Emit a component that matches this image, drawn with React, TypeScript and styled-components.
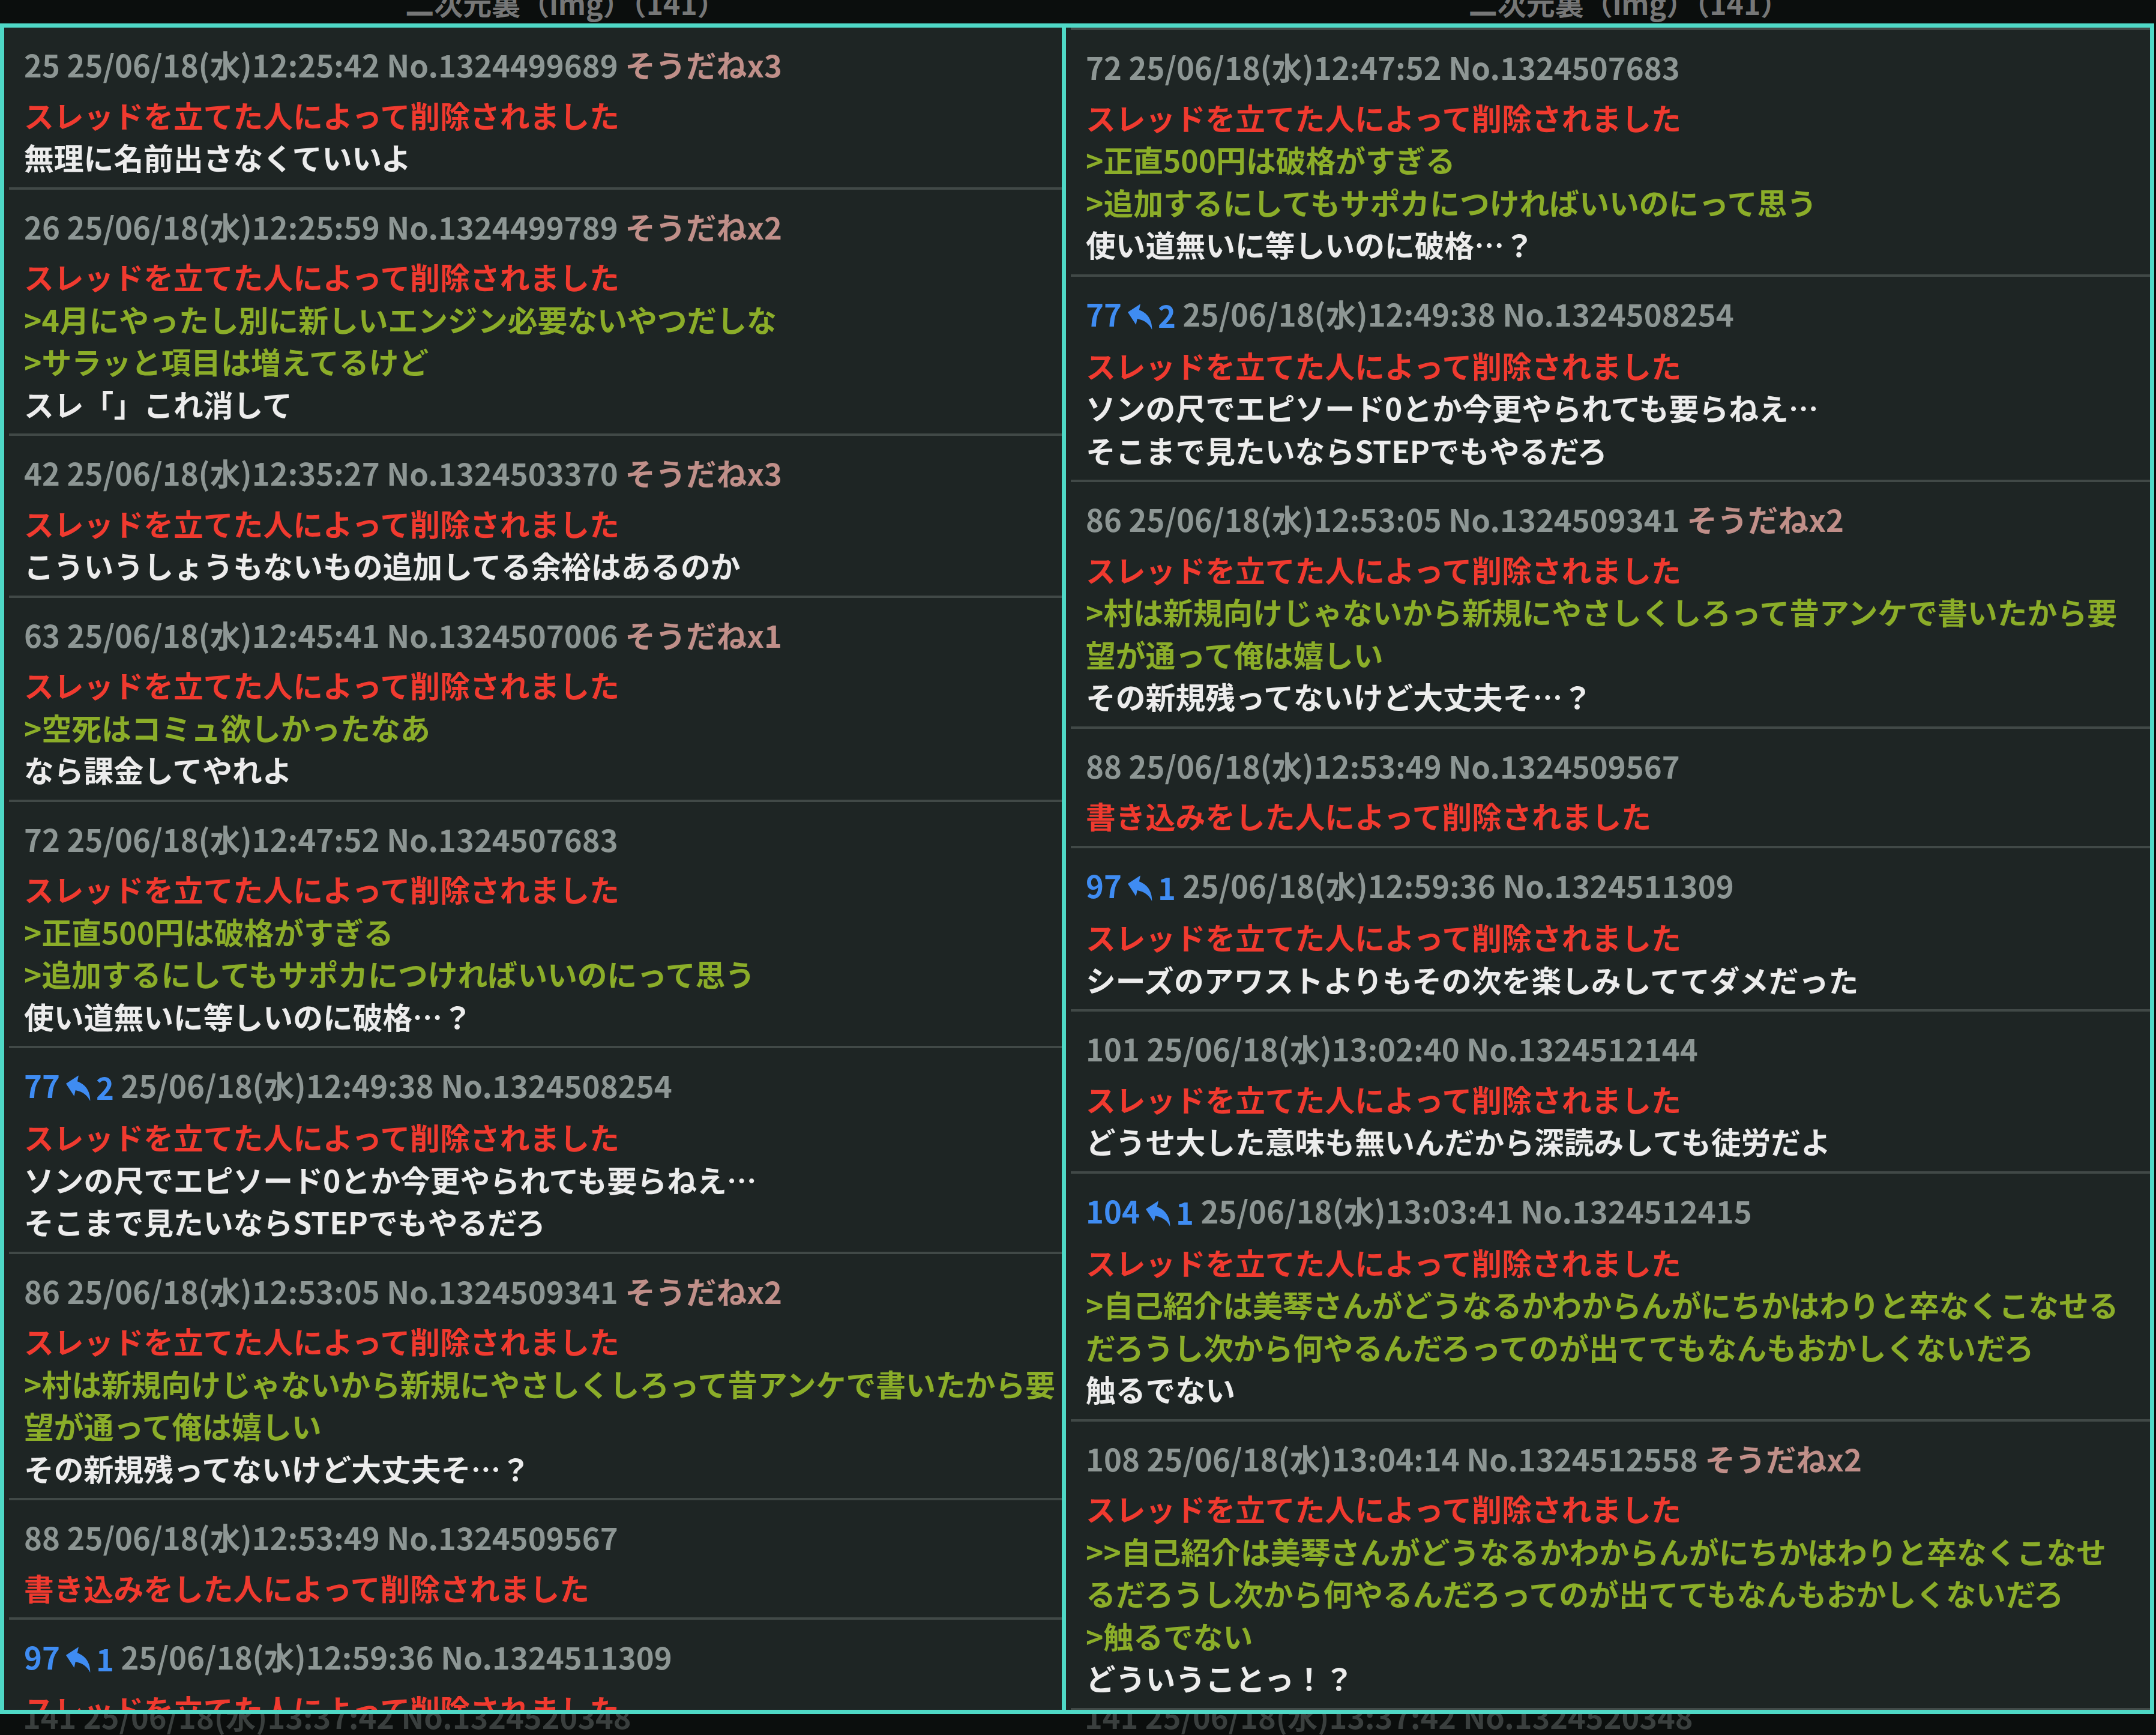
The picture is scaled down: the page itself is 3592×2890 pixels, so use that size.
import React from "react";
import styled, { createGlobalStyle } from "styled-components";

const C = {
  page: "#0b0e0d",
  panel: "#1e2524",
  teal: "#4fd8c6",
  rule: "#414947",
  meta: "#8d9694",
  sod: "#c08f89",
  blue: "#3f8cf2",
  red: "#f03a2f",
  quote: "#8bad29",
  text: "#ececec",
  title: "#767777",
  ghost: "#3a3f3e",
};

type Tone = "red" | "quote" | "plain";

interface Line {
  t: string;
  tone: Tone;
}

interface Post {
  no: number;
  reply?: number;
  date: string;
  id: string;
  sod?: string;
  lines: Line[];
}

const del: Line = { t: "スレッドを立てた人によって削除されました", tone: "red" };
const q = (t: string): Line => ({ t, tone: "quote" });
const p = (t: string): Line => ({ t, tone: "plain" });

const p72: Post = {
  no: 72,
  date: "25/06/18(水)12:47:52",
  id: "No.1324507683",
  lines: [del, q(">正直500円は破格がすぎる"), q(">追加するにしてもサポカにつければいいのにって思う"), p("使い道無いに等しいのに破格…？")],
};
const p77: Post = {
  no: 77,
  reply: 2,
  date: "25/06/18(水)12:49:38",
  id: "No.1324508254",
  lines: [del, p("ソンの尺でエピソード0とか今更やられても要らねえ…"), p("そこまで見たいならSTEPでもやるだろ")],
};
const p86: Post = {
  no: 86,
  date: "25/06/18(水)12:53:05",
  id: "No.1324509341",
  sod: "そうだねx2",
  lines: [
    del,
    q(">村は新規向けじゃないから新規にやさしくしろって昔アンケで書いたから要"),
    q("望が通って俺は嬉しい"),
    p("その新規残ってないけど大丈夫そ…？"),
  ],
};
const p88: Post = {
  no: 88,
  date: "25/06/18(水)12:53:49",
  id: "No.1324509567",
  lines: [{ t: "書き込みをした人によって削除されました", tone: "red" }],
};
const p97: Post = {
  no: 97,
  reply: 1,
  date: "25/06/18(水)12:59:36",
  id: "No.1324511309",
  lines: [del, p("シーズのアワストよりもその次を楽しみしててダメだった")],
};

const leftPosts: Post[] = [
  {
    no: 25,
    date: "25/06/18(水)12:25:42",
    id: "No.1324499689",
    sod: "そうだねx3",
    lines: [del, p("無理に名前出さなくていいよ")],
  },
  {
    no: 26,
    date: "25/06/18(水)12:25:59",
    id: "No.1324499789",
    sod: "そうだねx2",
    lines: [del, q(">4月にやったし別に新しいエンジン必要ないやつだしな"), q(">サラッと項目は増えてるけど"), p("スレ「」これ消して")],
  },
  {
    no: 42,
    date: "25/06/18(水)12:35:27",
    id: "No.1324503370",
    sod: "そうだねx3",
    lines: [del, p("こういうしょうもないもの追加してる余裕はあるのか")],
  },
  {
    no: 63,
    date: "25/06/18(水)12:45:41",
    id: "No.1324507006",
    sod: "そうだねx1",
    lines: [del, q(">空死はコミュ欲しかったなあ"), p("なら課金してやれよ")],
  },
  p72,
  p77,
  p86,
  p88,
  p97,
];

const rightPosts: Post[] = [
  p72,
  p77,
  p86,
  p88,
  p97,
  {
    no: 101,
    date: "25/06/18(水)13:02:40",
    id: "No.1324512144",
    lines: [del, p("どうせ大した意味も無いんだから深読みしても徒労だよ")],
  },
  {
    no: 104,
    reply: 1,
    date: "25/06/18(水)13:03:41",
    id: "No.1324512415",
    lines: [
      del,
      q(">自己紹介は美琴さんがどうなるかわからんがにちかはわりと卒なくこなせる"),
      q("だろうし次から何やるんだろってのが出ててもなんもおかしくないだろ"),
      p("触るでない"),
    ],
  },
  {
    no: 108,
    date: "25/06/18(水)13:04:14",
    id: "No.1324512558",
    sod: "そうだねx2",
    lines: [
      del,
      q(">>自己紹介は美琴さんがどうなるかわからんがにちかはわりと卒なくこなせ"),
      q("るだろうし次から何やるんだろってのが出ててもなんもおかしくないだろ"),
      q(">触るでない"),
      p("どういうことっ！？"),
    ],
  },
];

const GlobalStyle = createGlobalStyle`
  html, body {
    margin: 0;
    padding: 0;
    background: ${C.page};
  }
  body {
    font-family: "Noto Sans CJK JP", "Noto Sans", sans-serif;
    -webkit-font-smoothing: antialiased;
  }
`;

const Screen = styled.div`
  display: flex;
  width: 3592px;
  height: 2890px;
  overflow: hidden;
  background: ${C.page};
  font-size: 49.8px;
  font-weight: 700;
`;

const Window = styled.section<{ $w: number }>`
  display: flex;
  flex-direction: column;
  width: ${(p) => p.$w}px;
  flex: none;
  min-width: 0;
`;

const TitleBar = styled.header<{ $shift: number }>`
  height: 39px;
  flex: none;
  display: flex;
  justify-content: center;
  align-items: flex-end;
  overflow: hidden;
  padding-left: ${(p) => p.$shift}px;
`;

const Title = styled.div`
  color: ${C.title};
  font-size: 48px;
  line-height: 50px;
  margin-bottom: 10px;
  white-space: nowrap;
`;

const Frame = styled.div<{ $closed: boolean }>`
  flex: 1;
  min-height: 0;
  background: ${C.panel};
  border: 7px solid ${C.teal};
  border-right-width: ${(p) => (p.$closed ? 7 : 0)}px;
  overflow: hidden;
`;

const Rule = styled.div`
  height: 4px;
  margin-left: 8px;
  background: ${C.rule};
`;

const PostBox = styled.article`
  padding-top: 26px;
`;

const Head = styled.div`
  padding: 0 33px;
  font-size: 50.8px;
  line-height: 70.5px;
  color: ${C.meta};
  white-space: nowrap;
`;

const No = styled.span<{ $reply: boolean }>`
  color: ${(p) => (p.$reply ? C.blue : C.meta)};
`;

const ReplyCount = styled.span`
  color: ${C.blue};
  display: inline-flex;
  align-items: center;
  gap: 5px;
  margin-left: 9px;
`;

const ReplyIcon = styled.svg`
  width: 46px;
  height: 38px;
  fill: ${C.blue};
  transform: translateY(1px) rotate(12deg);
`;

const Sod = styled.span`
  color: ${C.sod};
`;

const Body = styled.div`
  margin-top: 13px;
  padding: 0 33px 15px;
`;

const toneColor: Record<Tone, string> = {
  red: C.red,
  quote: C.quote,
  plain: C.text,
};

const TextLine = styled.div<{ $tone: Tone }>`
  line-height: 70.5px;
  white-space: nowrap;
  color: ${(p) => toneColor[p.$tone]};
`;

const Footer = styled.footer`
  height: 35px;
  flex: none;
  overflow: hidden;
  padding-left: 38px;
`;

const Ghost = styled.div`
  margin-top: -22px;
  font-size: 50.5px;
  line-height: 50px;
  color: ${C.ghost};
  white-space: nowrap;
`;

const Reply = () => (
  <ReplyIcon viewBox="3 5 18 15">
    <path d="M10 9V5l-7 7 7 7v-4.1c5 0 8.5 1.6 11 5.1-1-5-4-10-11-11z" />
  </ReplyIcon>
);

const PostView = ({ post }: { post: Post }) => (
  <PostBox>
    <Head>
      <No $reply={!!post.reply}>{post.no}</No>
      {post.reply ? (
        <ReplyCount>
          <Reply />
          {post.reply}
        </ReplyCount>
      ) : null}{" "}
      {post.date} {post.id}
      {post.sod ? (
        <>
          {" "}
          <Sod>{post.sod}</Sod>
        </>
      ) : null}
    </Head>
    <Body>
      {post.lines.map((l, i) => (
        <TextLine key={i} $tone={l.tone}>
          {l.t}
        </TextLine>
      ))}
    </Body>
    <Rule />
  </PostBox>
);

const ThreadWindow = ({
  w,
  shift,
  closed,
  posts,
  leadRule,
}: {
  w: number;
  shift: number;
  closed: boolean;
  posts: Post[];
  leadRule?: boolean;
}) => (
  <Window $w={w}>
    <TitleBar $shift={shift}>
      <Title>二次元裏（img）（141）</Title>
    </TitleBar>
    <Frame $closed={closed}>
      {leadRule ? <Rule /> : null}
      {posts.map((post, i) => (
        <PostView key={i} post={post} />
      ))}
    </Frame>
    <Footer>
      <Ghost>141 25/06/18(水)13:37:42 No.1324520348</Ghost>
    </Footer>
  </Window>
);

export default function App() {
  return (
    <>
      <GlobalStyle />
      <Screen>
        <ThreadWindow w={1769} shift={116} closed={false} posts={leftPosts} />
        <ThreadWindow w={1820} shift={70} closed={true} posts={rightPosts} leadRule />
      </Screen>
    </>
  );
}
